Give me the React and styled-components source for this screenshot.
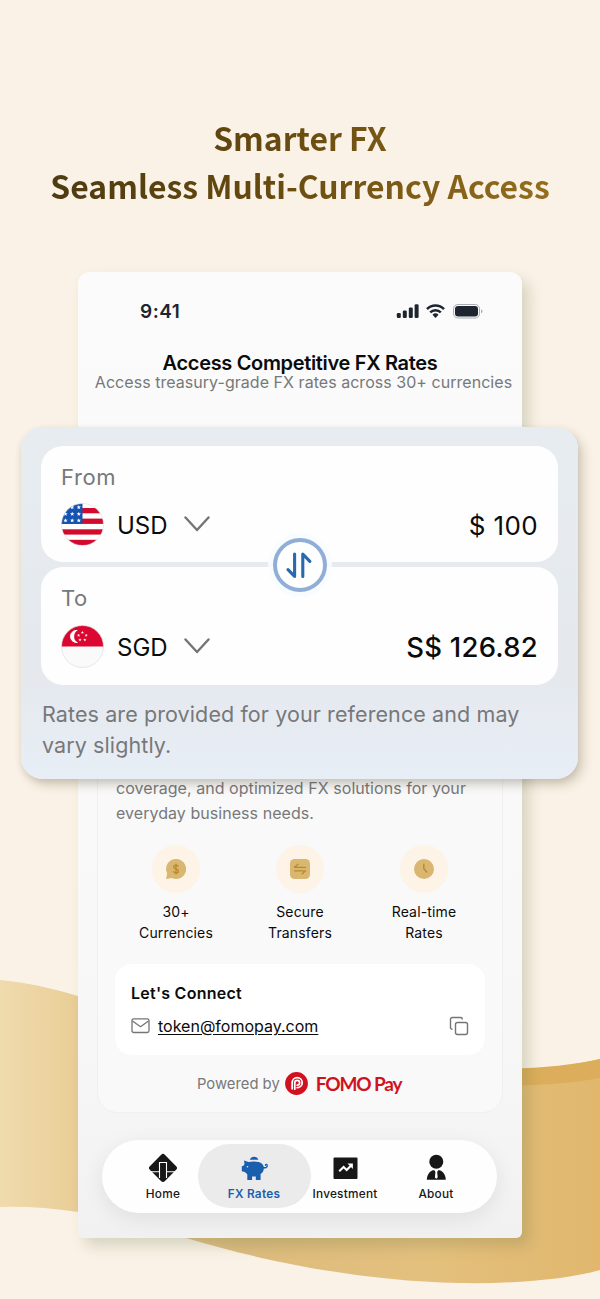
import React from "react";
import styled, { createGlobalStyle } from "styled-components";

const Colors = {
  cream: "#faf2e6",
  text: "#0b0b0c",
  muted: "#77787a",
  navy: "#1e2530",
  blue: "#1a5fae",
  gold: "#d9b771",
  goldDark: "#b98a2a",
  red: "#d01220",
};

const GlobalStyle = createGlobalStyle`
  * { box-sizing: border-box; }
  body {
    margin: 0;
    background: ${Colors.cream};
    font-family: Inter, "Liberation Sans", sans-serif;
    color: ${Colors.text};
  }
`;

const Page = styled.main`
  position: relative;
  width: 600px;
  height: 1299px;
  overflow: hidden;
  background: ${Colors.cream};
`;

const Waves = styled.svg`
  position: absolute;
  inset: 0;
`;

const Headline = styled.h1`
  position: relative;
  width: 504px;
  height: 272px;
  margin: 0 auto;
  padding-top: 113px;
  font: 700 31.9px/48px "Noto Sans CJK SC", sans-serif;
  text-align: center;
  white-space: nowrap;
  color: transparent;
  background: linear-gradient(100deg, #4f3c10 10%, #66490f 45%, #97701f 100%);
  background-clip: text;
  -webkit-background-clip: text;
`;

const Phone = styled.section`
  position: relative;
  display: flex;
  flex-direction: column;
  width: 444px;
  height: 966px;
  margin: 0 auto;
  border-radius: 12px 12px 6px 6px;
  background: linear-gradient(#fafbfa, #f8f8f8 70%, #f5f5f5 88%, #f1f1f2);
  box-shadow: 7px 8px 14px rgba(92, 104, 64, 0.22);
`;

const StatusBar = styled.div`
  display: flex;
  align-items: center;
  justify-content: space-between;
  height: 78px;
  padding: 0 39px 0 62px;
  color: ${Colors.navy};
`;

const Time = styled.span`
  font-size: 19px;
  font-weight: 600;
  letter-spacing: 0.5px;
`;

const Title = styled.h2`
  margin: 0;
  font-size: 20px;
  line-height: 26px;
  font-weight: 600;
  letter-spacing: -0.33px;
  text-align: center;
`;

const Subtitle = styled.p`
  height: 59px;
  margin: -4px -13px 0 -6px;
  font-size: 16px;
  line-height: 20px;
  letter-spacing: 0.04px;
  text-align: center;
  white-space: nowrap;
  color: ${Colors.muted};
`;

const QuotePanel = styled.section`
  position: relative;
  z-index: 1;
  display: flex;
  flex-direction: column;
  gap: 5px;
  height: 352px;
  margin: -4px -56px 0 -57px;
  padding: 19px 20px 0;
  border-radius: 22px;
  background: linear-gradient(#e7ecf1, #e5e9ee 70%, #e8eef6);
  box-shadow: 5px 6px 11px rgba(70, 60, 30, 0.2), 0 3px 7px rgba(0, 0, 0, 0.09);
`;

const CurrencyCard = styled.div`
  flex: none;
  height: ${(p) => p.$height}px;
  padding: 18px 20px 0;
  border-radius: 22px;
  background: #fefefe;
`;

const FieldLabel = styled.div`
  font-size: 22px;
  line-height: 26px;
  letter-spacing: 0.6px;
  color: ${Colors.muted};
`;

const CurrencyRow = styled.div`
  display: flex;
  align-items: center;
  height: 44px;
  margin-top: ${(p) => p.$gap}px;
`;

const Code = styled.span`
  width: 67px;
  margin-left: 13px;
  padding-top: 2px;
  font-size: 24px;
`;

const Amount = styled.span`
  margin-left: auto;
  padding-top: 2px;
  font-size: ${(p) => (p.$strong ? 27.5 : 26)}px;
  font-weight: ${(p) => (p.$strong ? 500 : 400)};
  letter-spacing: ${(p) => (p.$strong ? 0.25 : 0.4)}px;
`;

const SwapButton = styled.button`
  position: absolute;
  top: 111px;
  left: 252px;
  display: grid;
  place-items: center;
  width: 54px;
  height: 54px;
  padding: 0;
  border: 4px solid #91aed6;
  border-radius: 50%;
  background: #fff;
  box-shadow: 0 0 0 5px rgba(248, 252, 254, 0.9);
`;

const Disclaimer = styled.p`
  margin: 9px 0 0 1px;
  font-size: 21.5px;
  line-height: 31px;
  letter-spacing: 0.1px;
  color: ${Colors.muted};
`;

const InfoPanel = styled.section`
  width: 406px;
  height: 354px;
  margin: -20px auto 0;
  padding: 16px 17px 0;
  border: 1px solid #f0f0f0;
  border-radius: 0 0 20px 20px;
  background: #f9f9f9;
`;

const Description = styled.p`
  margin: 0 1px;
  font-size: 16px;
  line-height: 25px;
  letter-spacing: 0.05px;
  white-space: nowrap;
  color: ${Colors.muted};
`;

const Features = styled.div`
  display: grid;
  grid-template-columns: repeat(3, 1fr);
  height: 138px;
  margin: 0 -1px;
  padding-top: 19px;
`;

const Feature = styled.div`
  display: flex;
  flex-direction: column;
  align-items: center;
  font-size: 14px;
  line-height: 21px;
  letter-spacing: 0.15px;
  text-align: center;
  white-space: pre-line;
`;

const FeatureIcon = styled.span`
  display: grid;
  place-items: center;
  width: 48px;
  height: 48px;
  margin-bottom: 8px;
  border-radius: 50%;
  background: #fdf3e6;
`;

const Contact = styled.div`
  height: 91px;
  padding: 18px 16px 0;
  border-radius: 17px;
  background: #fff;
`;

const ContactTitle = styled.h3`
  margin: 0 0 12px;
  font-size: 16px;
  line-height: 22px;
  font-weight: 600;
  letter-spacing: 0.25px;
`;

const ContactRow = styled.div`
  display: flex;
  align-items: center;
  height: 20px;

  svg:last-child { margin-left: auto; }
`;

const Email = styled.a`
  margin-left: 8px;
  font-size: 16px;
  text-decoration: underline;
  text-underline-offset: 2px;
`;

const Powered = styled.div`
  display: flex;
  align-items: center;
  height: 57px;
  padding-left: 82px;
  font-size: 14.8px;
  color: ${Colors.muted};

  svg { margin: 0 8px 0 5px; }
`;

const Brand = styled.strong`
  font: 700 19px Lato, sans-serif;
  letter-spacing: -1.15px;
  color: ${Colors.red};
`;

const NavBar = styled.nav`
  display: flex;
  width: 395px;
  height: 73px;
  margin: 27px 0 0 24px;
  padding: 4px 15.5px;
  border-radius: 37px;
  background: #fefefe;
  box-shadow: 0 6px 22px rgba(0, 0, 0, 0.08);
`;

const NavItem = styled.a`
  display: flex;
  flex-direction: column;
  align-items: center;
  flex: 0 0 ${(p) => (p.$active ? 113 : 91)}px;
  height: 64px;
  margin: ${(p) => (p.$active ? "0 -11px" : "0")};
  padding-top: 9px;
  border-radius: 32px;
  font-size: 11.8px;
  line-height: 16px;
  font-weight: ${(p) => (p.$active ? 600 : 500)};
  letter-spacing: 0.25px;
  color: ${(p) => (p.$active ? Colors.blue : "#171718")};
  background: ${(p) => (p.$active ? "#ebebeb" : "none")};

  svg { margin-bottom: 3px; flex: none; }
`;

const StatusIcons = () => (
  <svg width="87" height="18" viewBox="0 0 87 18" fill={Colors.navy}>
    <rect x="0.8" y="11" width="4" height="5" rx="1.3" />
    <rect x="6.8" y="8.5" width="4" height="7.5" rx="1.3" />
    <rect x="12.8" y="5.5" width="4" height="10.5" rx="1.3" />
    <rect x="18.6" y="2.2" width="4" height="13.8" rx="1.3" />
    <g fill="none" stroke={Colors.navy} strokeWidth="2.5">
      <path d="M31 7.1a12 12 0 0 1 17 0" />
      <path d="M34.2 10.4a7.5 7.5 0 0 1 10.6 0" />
    </g>
    <path d="M36.5 12.7a4.5 4.5 0 0 1 6 0L39.5 16z" />
    <rect x="57.5" y="2.5" width="26" height="13.5" rx="4.3" fill="none" stroke="#a9adb2" />
    <rect x="59" y="4" width="23" height="10.5" rx="3" />
    <path d="M85 7.3v4c2-.8 2-3.2 0-4z" fill="#a9adb2" />
  </svg>
);

const starPath = "m0-2.3.6 1.5h1.6l-1.3 1 .5 1.6L0 .9l-1.4.9.5-1.6-1.3-1h1.6z";

const UsFlag = () => (
  <svg width="43" height="43" viewBox="0 0 43 43">
    <clipPath id="us"><circle cx="21.5" cy="21.5" r="21" /></clipPath>
    <g clipPath="url(#us)">
      <rect width="43" height="43" fill="#fff" />
      {[5, 15.6, 26.3, 36.8].map((y) => (
        <rect key={y} y={y} width="43" height="5.3" fill="#d20a2e" />
      ))}
      <rect width="21.5" height="21" fill="#1454b0" />
      {[4.4, 11, 17.5].map((y) =>
        [4.5, 11.2, 17.8].map((x) => (
          <path key={`${x}-${y}`} d={starPath} transform={`translate(${x} ${y})`} fill="#fff" />
        ))
      )}
    </g>
    <circle cx="21.5" cy="21.5" r="21" fill="none" stroke="#dedede" strokeWidth=".6" />
  </svg>
);

const SgFlag = () => (
  <svg width="43" height="43" viewBox="0 0 43 43">
    <clipPath id="sg"><circle cx="21.5" cy="21.5" r="21" /></clipPath>
    <g clipPath="url(#sg)">
      <rect width="43" height="43" fill="#fafafa" />
      <rect width="43" height="21.5" fill="#dc0730" />
      <path d="M17 5.3a6.4 6.4 0 1 0 0 12.4 6.9 6.9 0 0 1 0-12.4z" fill="#fff" />
      {[[21.4, 7.5], [25.2, 10.4], [23.8, 14.9], [19, 14.9], [17.6, 10.4]].map(([x, y]) => (
        <path key={x} d={starPath} transform={`translate(${x} ${y}) scale(.72)`} fill="#fff" />
      ))}
    </g>
    <circle cx="21.5" cy="21.5" r="21" fill="none" stroke="#dedede" strokeWidth=".7" />
  </svg>
);

const Chevron = () => (
  <svg width="26" height="16" viewBox="0 0 26 16" fill="none" stroke="#747577" strokeWidth="2.4" strokeLinecap="round" strokeLinejoin="round">
    <path d="m1.5 1.5 11.5 12.5 11.5-12.5" />
  </svg>
);

const SwapIcon = () => (
  <svg width="28" height="28" viewBox="0 0 28 28" fill="none" stroke="#286aad" strokeWidth="3.1" strokeLinecap="round" strokeLinejoin="round">
    <path d="M8.6 3v22.4L2 18.6M16.8 25.4V3l7 7.4" />
  </svg>
);

const MoneyIcon = () => (
  <svg width="20" height="20" viewBox="0 0 20 20">
    <path d="M10 0a10 10 0 1 1-4.2 19L0 20l1.2-5.3A10 10 0 0 1 10 0z" fill={Colors.gold} />
    <path d="M12.3 7.7c-.3-1-1.2-1.6-2.3-1.6-1.4 0-2.3.7-2.3 1.9 0 2.6 4.7 1.3 4.7 4 0 1.2-1 2-2.4 2s-2.3-.7-2.5-1.8M10 4.7v10.7" fill="none" stroke={Colors.goldDark} strokeWidth="1.3" />
  </svg>
);

const TransferIcon = () => (
  <svg width="20" height="20" viewBox="0 0 20 20">
    <rect width="20" height="20" rx="4.5" fill={Colors.gold} />
    <path d="M15.5 8.3h-11L8 5.2M4.5 11.8h11L12 14.9" fill="none" stroke={Colors.goldDark} strokeWidth="1.3" strokeLinecap="round" strokeLinejoin="round" />
  </svg>
);

const ClockIcon = () => (
  <svg width="20" height="20" viewBox="0 0 20 20">
    <circle cx="10" cy="10" r="10" fill={Colors.gold} />
    <path d="M9.8 5.2v4.5l3 3.3" fill="none" stroke={Colors.goldDark} strokeWidth="1.4" strokeLinecap="round" />
  </svg>
);

const MailIcon = () => (
  <svg width="19" height="18" viewBox="0 0 19 18" fill="none" stroke="#747577" strokeWidth="1.3" strokeLinejoin="round">
    <rect x="1" y="1.8" width="17" height="13.7" rx="1.8" />
    <path d="m1.5 4 8 5.7 8-5.7" />
  </svg>
);

const CopyIcon = () => (
  <svg width="20" height="20" viewBox="0 0 20 20" fill="none" stroke="#747577" strokeWidth="1.4" strokeLinecap="round">
    <rect x="6.5" y="6.5" width="12" height="12" rx="2" />
    <path d="M3 13.2c-1 0-1.5-.8-1.5-1.8V3.5c0-1.2.8-2 2-2h8c1 0 1.8.5 1.8 1.6" />
  </svg>
);

const FomoLogo = () => (
  <svg width="23" height="23" viewBox="0 0 23 23">
    <circle cx="11.5" cy="11.5" r="11.4" fill={Colors.red} />
    <g fill="none" stroke="#fff" strokeLinecap="round">
      <path d="M7.2 16.7v-6a5 5 0 1 1 5 5" strokeWidth="1.8" />
      <path d="M9.8 17.2v-6.4a2.4 2.4 0 1 1 2.4 2.4" strokeWidth="1.7" />
    </g>
  </svg>
);

const HomeIcon = () => (
  <svg width="30" height="30" viewBox="0 0 30 30">
    <path d="M13.2 1.7a2.5 2.5 0 0 1 3.6 0l11.6 11.7c.9.9.9 2.1 0 3L17 28a2.7 2.7 0 0 1-4 0L1.6 16.4c-.9-.9-.9-2.1 0-3z" fill="#171718" />
    <path d="M2 18.8h9.5M11.5 25V9.5h7V25M18.5 18.8H28" fill="none" stroke="#fff" strokeWidth="1.1" />
  </svg>
);

const PiggyIcon = () => (
  <svg width="30" height="30" viewBox="0 0 30 30" fill={Colors.blue}>
    <path d="M10.8 6.8a4.5 4.5 0 0 1 8.6 0z" />
    <path d="M5 7.5 9.5 9q5-1.2 10.2 0c3 .6 4.8 2.7 5.1 5.3.3 3-1 5.4-3.2 6.7v6h-4.8v-3.5h-3.7V27H8.3v-5.8L5.8 19l-3-.8v-5.3h1.5l1.2-2z" />
    <path d="M24 14.5c3 .8 4.6-.5 4.2-2.3-.3-1.3-1.9-1.1-1.7.1" fill="none" stroke={Colors.blue} strokeWidth="1.3" strokeLinecap="round" />
    <circle cx="8.5" cy="13.8" r=".8" fill="#ebebeb" />
  </svg>
);

const InvestIcon = () => (
  <svg width="30" height="30" viewBox="0 0 30 30">
    <rect x="3.5" y="4.5" width="24" height="21.5" rx="1" fill="#171718" />
    <path d="m9.2 18.2 4.4-4.2 3.1 3 4.4-4.4" fill="none" stroke="#fff" strokeWidth="2.1" />
    <path d="M17.5 10.5h5.4v5.4z" fill="#fff" />
  </svg>
);

const AboutIcon = () => (
  <svg width="30" height="30" viewBox="0 0 30 30" fill="#171718">
    <circle cx="15.3" cy="8.8" r="7" />
    <path d="M5.8 26.8c.2-5.2 3-8.6 6-9.6h7c3 1 5.8 4.4 6 9.6z" />
    <path d="M13.4 16.9h3.8l-1 2 .5 5.5-1.4 1.4-1.4-1.4.5-5.5z" fill="#fff" />
  </svg>
);

const features = [
  { icon: <MoneyIcon />, label: "30+\nCurrencies" },
  { icon: <TransferIcon />, label: "Secure\nTransfers" },
  { icon: <ClockIcon />, label: "Real-time\nRates" },
];

const navItems = [
  { icon: <HomeIcon />, label: "Home" },
  { icon: <PiggyIcon />, label: "FX Rates", active: true },
  { icon: <InvestIcon />, label: "Investment" },
  { icon: <AboutIcon />, label: "About" },
];

const App = () => (
  <>
    <GlobalStyle />
    <Page>
      <Waves width="600" height="1299" viewBox="0 0 600 1299">
        <defs>
          <linearGradient id="sand">
            <stop offset="0" stopColor="#f0dbae" />
            <stop offset=".14" stopColor="#e8cc94" />
            <stop offset=".4" stopColor="#dcbc7e" />
            <stop offset=".72" stopColor="#e4c07d" />
            <stop offset="1" stopColor="#e0b76d" />
          </linearGradient>
        </defs>
        <path d="M0 980C30 983 55 989 78 996C230 1050 400 1085 522 1069C555 1068 580 1064 600 1059V1270C565 1280 510 1284 459 1283C360 1281 262 1261 186 1238C145 1226 110 1216 78 1212Q38 1206 0 1207Z" fill="url(#sand)" />
        <path d="M500 1069Q560 1068 600 1059V1078Q565 1085 500 1086Z" fill="#dcae5b" />
      </Waves>

      <Headline>
        Smarter FX<br />
        Seamless Multi-Currency Access
      </Headline>

      <Phone>
        <StatusBar>
          <Time>9:41</Time>
          <StatusIcons />
        </StatusBar>
        <Title>Access Competitive FX Rates</Title>
        <Subtitle>Access treasury-grade FX rates across 30+ currencies</Subtitle>

        <QuotePanel>
          <CurrencyCard $height={116}>
            <FieldLabel>From</FieldLabel>
            <CurrencyRow $gap={12}>
              <UsFlag />
              <Code>USD</Code>
              <Chevron />
              <Amount>$ 100</Amount>
            </CurrencyRow>
          </CurrencyCard>
          <CurrencyCard $height={118}>
            <FieldLabel>To</FieldLabel>
            <CurrencyRow $gap={13}>
              <SgFlag />
              <Code>SGD</Code>
              <Chevron />
              <Amount $strong>S$ 126.82</Amount>
            </CurrencyRow>
          </CurrencyCard>
          <SwapButton aria-label="Swap currencies">
            <SwapIcon />
          </SwapButton>
          <Disclaimer>
            Rates are provided for your reference and may<br />
            vary slightly.
          </Disclaimer>
        </QuotePanel>

        <InfoPanel>
          <Description>
            coverage, and optimized FX solutions for your<br />
            everyday business needs.
          </Description>
          <Features>
            {features.map((f) => (
              <Feature key={f.label}>
                <FeatureIcon>{f.icon}</FeatureIcon>
                {f.label}
              </Feature>
            ))}
          </Features>
          <Contact>
            <ContactTitle>Let's Connect</ContactTitle>
            <ContactRow>
              <MailIcon />
              <Email>token@fomopay.com</Email>
              <CopyIcon />
            </ContactRow>
          </Contact>
          <Powered>
            Powered by
            <FomoLogo />
            <Brand>FOMO Pay</Brand>
          </Powered>
        </InfoPanel>

        <NavBar>
          {navItems.map((item) => (
            <NavItem key={item.label} $active={item.active}>
              {item.icon}
              {item.label}
            </NavItem>
          ))}
        </NavBar>
      </Phone>
    </Page>
  </>
);

export default App;
